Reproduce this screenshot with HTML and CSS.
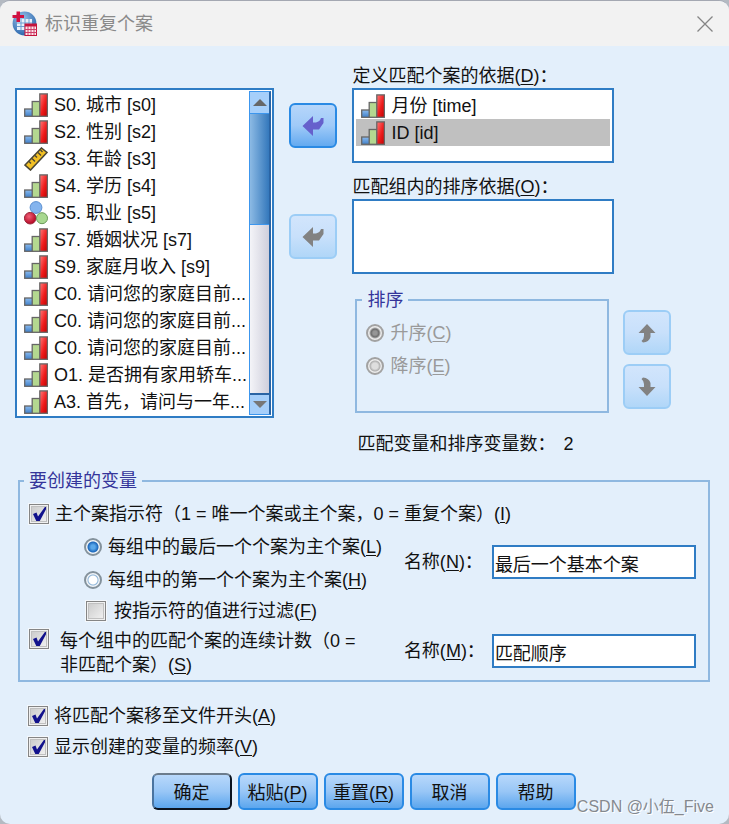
FILE: index.html
```
<!DOCTYPE html>
<html lang="zh-CN">
<head>
  <meta charset="UTF-8" />
  <meta name="viewport" content="width=device-width, initial-scale=1.0"/>
  <title>标识重复个案</title>
  <link rel="stylesheet" href="styles.css">
</head>
<body>
  <!-- shared icons -->
  <svg class="icon-defs" aria-hidden="true">
    <defs>
      <linearGradient id="blue" x1="0" y1="0" x2="0" y2="1">
        <stop offset="0" stop-color="#8cbcf0"/><stop offset="1" stop-color="#3f7fc8"/>
      </linearGradient>
      <linearGradient id="red" x1="0" y1="0" x2="1" y2="1">
        <stop offset="0" stop-color="#ff7a7a"/><stop offset="0.55" stop-color="#ee1c1c"/><stop offset="1" stop-color="#c00000"/>
      </linearGradient>
      <radialGradient id="globe" cx="0.4" cy="0.3" r="0.7">
        <stop offset="0" stop-color="#9cc4ea"/><stop offset="1" stop-color="#2c68ae"/>
      </radialGradient>
      <radialGradient id="ball-red" cx="0.4" cy="0.35" r="0.6">
        <stop offset="0" stop-color="#f06078"/><stop offset="1" stop-color="#b80c28"/>
      </radialGradient>
    </defs>
    <symbol id="ordinal" viewBox="0 0 24 24">
      <rect x="0.7" y="16" width="8" height="7.3" fill="url(#blue)" stroke="#666" stroke-width="1.3"/>
      <rect x="8.2" y="8.5" width="8" height="14.8" fill="#b4d890" stroke="#666" stroke-width="1.3"/>
      <rect x="15.8" y="0.9" width="7.6" height="22.4" fill="url(#red)" stroke="#666" stroke-width="1.3"/>
    </symbol>
    <symbol id="scale" viewBox="0 0 24 24">
      <path d="M17.500 1L23 5.500L6.500 23L1 18Z" fill="#f2c024" stroke="#4a4636" stroke-width="1.6"/>
      <path d="M5 14.500l2 2M8 11.500l3 3M11 8.500l2 2M14 5.500l3 3M16.500 3l2 2" stroke="#4a4636" stroke-width="1.4"/>
    </symbol>
    <symbol id="nominal" viewBox="0 0 24 24">
      <circle cx="12" cy="6.500" r="5.900" fill="#84b4ee" stroke="#5b8fd0"/>
      <circle cx="6.200" cy="17.200" r="5.800" fill="url(#ball-red)" stroke="#98283c"/>
      <circle cx="18" cy="17.200" r="5.500" fill="#a8d890" stroke="#6a9a58"/>
    </symbol>
    <symbol id="move" viewBox="0 0 24 22">
      <path d="M1.500 11L12 1V7.500H15Q19 6.500 20 3H22.500V8L18 14.500H12V21Z" fill="currentColor"/>
    </symbol>
    <symbol id="up" viewBox="0 0 18 20">
      <path d="M9 1L17.500 10H12.500V14Q11 19 5 19.500L3.500 18Q6 16 6 13V10H0.500Z" fill="currentColor"/>
    </symbol>
    <symbol id="down" viewBox="0 0 18 20">
      <path d="M9 19L17.500 10H12.500V6Q11 1 5 0.500L3.500 2Q6 4 6 7V10H0.500Z" fill="currentColor"/>
    </symbol>
  </svg>

  <div class="dialog">
    <div class="title-bar">
      <svg class="app-icon" viewBox="0 0 25 25">
        <circle cx="12.500" cy="12.500" r="11.900" fill="url(#globe)"/>
        <path d="M5 8H20V19H5Z" fill="#e8f1fa"/>
        <path d="M5 12H20M5 15.500H20M9 8V19M13 8V19M17 8V19" stroke="#6d9fd2" stroke-width="1"/>
        <path d="M4.500 0.500H8V4H12V7H8V11H4.500V7H0.500V4H4.500Z" fill="#d01040"/>
        <rect x="13" y="13" width="11.500" height="11.500" fill="#fbe6ea" stroke="#c4143c"/>
        <path d="M13 14.200H24.500" stroke="#c4143c" stroke-width="2.500"/>
        <path d="M13 18.500H24.500M13 21.500H24.500M16 15V24M19 15V24M22 15V24" stroke="#d0406a" stroke-width="1"/>
      </svg>
      <span class="title">标识重复个案</span>
      <button class="close" aria-label="关闭">
        <svg viewBox="0 0 16 16"><path d="M0.500 0.500L15.500 15.500M15.500 0.500L0.500 15.500" stroke="#858585" stroke-width="1.300"/></svg>
      </button>
    </div>

    <div class="content">
      <div class="top">
        <div class="source box">
          <ul class="items">
            <li><svg><use href="#ordinal"/></svg>S0. 城市 [s0]</li>
            <li><svg><use href="#ordinal"/></svg>S2. 性别 [s2]</li>
            <li><svg><use href="#scale"/></svg>S3. 年龄 [s3]</li>
            <li><svg><use href="#ordinal"/></svg>S4. 学历 [s4]</li>
            <li><svg><use href="#nominal"/></svg>S5. 职业 [s5]</li>
            <li><svg><use href="#ordinal"/></svg>S7. 婚姻状况 [s7]</li>
            <li><svg><use href="#ordinal"/></svg>S9. 家庭月收入 [s9]</li>
            <li><svg><use href="#ordinal"/></svg>C0. 请问您的家庭目前...</li>
            <li><svg><use href="#ordinal"/></svg>C0. 请问您的家庭目前...</li>
            <li><svg><use href="#ordinal"/></svg>C0. 请问您的家庭目前...</li>
            <li><svg><use href="#ordinal"/></svg>O1. 是否拥有家用轿车...</li>
            <li><svg><use href="#ordinal"/></svg>A3. 首先，请问与一年...</li>
          </ul>
          <div class="scrollbar">
            <button class="scroll-up" aria-label="向上滚动"></button>
            <div class="thumb"></div>
            <button class="scroll-down" aria-label="向下滚动"></button>
          </div>
        </div>

        <div class="movers">
          <button class="icon-btn" aria-label="移动到匹配依据"><svg class="move"><use href="#move"/></svg></button>
          <button class="icon-btn" aria-label="移动到排序依据" disabled><svg class="move"><use href="#move"/></svg></button>
        </div>

        <div class="targets">
          <div class="label" id="define-label">定义匹配个案的依据(<u>D</u>)：</div>
          <ul class="items box target" aria-labelledby="define-label">
            <li><svg><use href="#ordinal"/></svg>月份 [time]</li>
            <li class="selected"><svg><use href="#ordinal"/></svg>ID [id]</li>
          </ul>
          <div class="label" id="sort-label">匹配组内的排序依据(<u>O</u>)：</div>
          <ul class="items box target" aria-labelledby="sort-label"></ul>
          <div class="sort-row">
            <fieldset class="sort" disabled>
              <legend>排序</legend>
              <label class="option"><input type="radio" name="order" checked><span>升序(<u>C</u>)</span></label>
              <label class="option"><input type="radio" name="order"><span>降序(<u>E</u>)</span></label>
            </fieldset>
            <div class="order-btns">
              <button class="icon-btn" aria-label="上移" disabled><svg class="arrow"><use href="#up"/></svg></button>
              <button class="icon-btn" aria-label="下移" disabled><svg class="arrow"><use href="#down"/></svg></button>
            </div>
          </div>
          <div class="count"><span>匹配变量和排序变量数：</span><span>2</span></div>
        </div>
      </div>

      <fieldset class="create">
        <legend>要创建的变量</legend>
        <label class="option"><input type="checkbox" checked><span>主个案指示符（1 = 唯一个案或主个案，0 = 重复个案）(<u>I</u>)</span></label>
        <div class="create-row">
          <div class="nested">
            <label class="option"><input type="radio" name="primary" checked><span>每组中的最后一个个案为主个案(<u>L</u>)</span></label>
            <label class="option"><input type="radio" name="primary"><span>每组中的第一个个案为主个案(<u>H</u>)</span></label>
            <label class="option filter"><input type="checkbox"><span>按指示符的值进行过滤(<u>F</u>)</span></label>
          </div>
          <div class="name">
            <label for="name-n">名称(<u>N</u>)：</label>
            <input class="box" type="text" id="name-n" value="最后一个基本个案">
          </div>
        </div>
        <div class="create-row">
          <label class="option sequence"><input type="checkbox" checked><span>每个组中的匹配个案的连续计数（0 =<br>非匹配个案）(<u>S</u>)</span></label>
          <div class="name">
            <label for="name-m">名称(<u>M</u>)：</label>
            <input class="box" type="text" id="name-m" value="匹配顺序">
          </div>
        </div>
      </fieldset>

      <div class="extra">
        <label class="option"><input type="checkbox" checked><span>将匹配个案移至文件开头(<u>A</u>)</span></label>
        <label class="option"><input type="checkbox" checked><span>显示创建的变量的频率(<u>V</u>)</span></label>
      </div>

      <div class="buttons">
        <button class="default">确定</button>
        <button>粘贴(<u>P</u>)</button>
        <button>重置(<u>R</u>)</button>
        <button>取消</button>
        <button>帮助</button>
      </div>
    </div>
    <div class="watermark">CSDN @小伍_Five</div>
  </div>
</body>
</html>
```

FILE: styles.css
```
* {
  box-sizing: border-box;
}

body {
  margin: 0;
  background: #b4bac2;
  color: #111;
  font-family: "Liberation Sans", "Noto Sans CJK SC", sans-serif;
  font-size: 18px;
  line-height: 24px;
}

button,
input {
  font: inherit;
  color: inherit;
  margin: 0;
}

u {
  text-underline-offset: 2px;
}

.icon-defs {
  position: absolute;
  width: 0;
  height: 0;
}

.dialog {
  position: relative;
  min-height: 100vh;
  background: #e3effb;
  border-top: 1px solid #a4a8b2;
  border-radius: 10px;
  overflow: hidden;
}

/* title bar */
.title-bar {
  display: flex;
  align-items: center;
  gap: 8px;
  height: 45px;
  padding: 0 16px 0 12px;
  background: #f2f2f2;
  color: #8a8a8a;
}

.app-icon {
  width: 25px;
  height: 25px;
}

.title {
  flex: 1;
}

.close {
  display: flex;
  padding: 0;
  border: none;
  background: none;
}

.close svg {
  width: 16px;
  height: 16px;
}

.content {
  padding: 18px 19px 14px 15px;
}

/* variable lists */
.top {
  display: grid;
  grid-template-columns: minmax(0, 259fr) 48px minmax(0, 318fr);
  gap: 15px;
  padding-right: 39px;
}

.box {
  background: #fff;
  border: 2px solid #2f7cc4;
}

.source {
  display: flex;
  align-self: start;
  margin-top: 24px;
}

.items {
  margin: 0;
  padding: 2px;
  list-style: none;
}

.source .items {
  flex: 1;
  min-width: 0;
  padding: 1px 0 1px 2px;
}

.items li {
  display: flex;
  align-items: center;
  gap: 6px;
  height: 27px;
  padding-left: 5px;
  white-space: nowrap;
  overflow: hidden;
}

.items svg {
  flex: none;
  width: 24px;
  height: 24px;
}

.items .selected {
  background: #c0c0c0;
}

.target {
  height: 75px;
}

.scrollbar {
  display: flex;
  flex-direction: column;
  width: 22px;
  margin: 1px 1px 1px 0;
  border: 1px solid #3c96ee;
  border-right: 2px solid #2a64a4;
  background: linear-gradient(to right, #f4f4f8, #cfcfdc);
}

.scrollbar button {
  display: flex;
  align-items: center;
  justify-content: center;
  height: 21px;
  padding: 0;
  border: none;
  background: #a6cffa;
}

.scroll-up::before,
.scroll-down::before {
  content: "";
  border: 7px solid transparent;
}

.scroll-up::before {
  border-top: none;
  border-bottom-color: #666;
}

.scroll-down::before {
  border-bottom: none;
  border-top-color: #777;
}

.scrollbar .scroll-down {
  margin-top: auto;
  border-top: 2px solid #2a64a4;
}

.thumb {
  height: 112px;
  border-top: 1px solid #3c96ee;
  border-bottom: 1px solid #3c96ee;
  background: linear-gradient(to right, #8cbae4, #3478bc);
}

.movers {
  display: flex;
  flex-direction: column;
  gap: 66px;
  padding-top: 39px;
}

.icon-btn {
  display: flex;
  align-items: center;
  justify-content: center;
  width: 48px;
  height: 45px;
  padding: 0;
  border: 2px solid #2a8ae4;
  border-radius: 6px;
  background: linear-gradient(#b6d6fa, #a0caf8 50%, #64aaf0);
  color: #6660cc;
}

.icon-btn:disabled {
  border-color: #9ccdf6;
  background: linear-gradient(#d2e5fc, #c8e0fb 50%, #b0d6f8);
  color: #828282;
}

.move {
  width: 24px;
  height: 22px;
}

.arrow {
  width: 18px;
  height: 20px;
}

.targets .target {
  margin-right: 57px;
}

.targets .label + .target + .label {
  margin-top: 12px;
}

/* group boxes */
fieldset {
  margin: 0;
  min-width: 0;
  border: 2px solid #8fb8e0;
}

legend {
  padding: 0 5px;
  color: #34349a;
}

.sort-row {
  display: flex;
  gap: 14px;
  margin-top: 14px;
}

.sort {
  flex: 1;
  height: 125px;
  margin-left: 3px;
  padding: 4px 9px;
}

.sort legend {
  margin-left: -4px;
}

.order-btns {
  display: flex;
  flex-direction: column;
  gap: 9px;
  padding-top: 22px;
}

.count {
  display: flex;
  gap: 8px;
  margin: 19px 0 0 5px;
}

.create {
  margin: 13px 0 0 3px;
  padding: 4px 12px 2px 9px;
}

.create legend {
  margin-left: -5px;
}

/* options */
.option {
  display: flex;
  align-items: center;
  gap: 6px;
  height: 33px;
  white-space: nowrap;
}

fieldset:disabled .option {
  color: #9a9a9a;
}

input[type="checkbox"],
input[type="radio"] {
  appearance: none;
  flex: none;
  width: 20px;
  height: 20px;
}

input[type="checkbox"] {
  border: 1px solid #858585;
  outline: 1px solid #f4f8fc;
  background: linear-gradient(135deg, #c8c8c8, #f4f4f4);
  box-shadow: inset 0 0 0 1px #f0f0f0, inset 0 0 0 2px #c0c0c0;
}

input[type="checkbox"]:checked {
  background: url("data:image/svg+xml,%3Csvg xmlns='http://www.w3.org/2000/svg' viewBox='0 0 18 18'%3E%3Cpath d='M3 9L6.500 7.500L8 11.500L16 0.500H18L9.500 16.500H6.500Z' fill='%2312128c'/%3E%3C/svg%3E") center / 18px 18px, linear-gradient(135deg, #c8c8c8, #f4f4f4);
}

input[type="radio"] {
  width: 18px;
  height: 18px;
  border: 2px solid #84929c;
  border-radius: 50%;
  background: radial-gradient(#fff 0 4px, #8cb4d8 5px, #f0f4f8 6px);
}

input[type="radio"]:checked {
  background: radial-gradient(#5aa8ea 0 2px, #1c68bc 5px, #f0f4f8 6px);
}

input[type="radio"]:disabled {
  border-color: #a2a2a2;
  background: radial-gradient(#dedede 0 3px, #b0b0b0 5px, #ececec 6px);
}

input[type="radio"]:checked:disabled {
  background: radial-gradient(#969696 0 2px, #6c6c6c 4px, #ececec 6px);
}

.create-row {
  display: grid;
  grid-template-columns: minmax(0, 376fr) minmax(0, 293fr);
}

.nested {
  padding-left: 55px;
}

.filter {
  gap: 8px;
  height: 30px;
  padding-left: 2px;
}

.sequence {
  align-items: flex-start;
  gap: 11px;
  height: 52px;
  padding-top: 3px;
}

.name {
  display: flex;
  align-items: center;
  align-self: start;
  height: 34px;
  margin-top: 15px;
}

.name label {
  flex: none;
  width: 88px;
}

.name input {
  flex: 1;
  min-width: 0;
  height: 34px;
  padding: 2px 1px 0;
  border-radius: 0;
}

.sequence + .name {
  margin-top: 8px;
}

.extra {
  margin: 18px 0 0 13px;
}

.extra .option {
  height: 31px;
}

/* bottom buttons */
.buttons {
  display: flex;
  justify-content: center;
  gap: 6px;
  margin-top: 11px;
  padding-left: 2px;
}

.buttons button {
  width: 80px;
  height: 37px;
  padding: 2px 0 0;
  border: 2px solid #2a8ae4;
  border-radius: 6px;
  background: linear-gradient(#b8d8fb, #98c6f6 50%, #5ca6ee);
}

.buttons .default {
  border-color: #6c7c8c #0c1420 #0c1420 #4a74a0;
}

.watermark {
  position: absolute;
  right: 15px;
  bottom: 5px;
  color: #85898f;
  font-size: 16px;
  text-shadow: 1px 1px 0 #fff;
}
```
